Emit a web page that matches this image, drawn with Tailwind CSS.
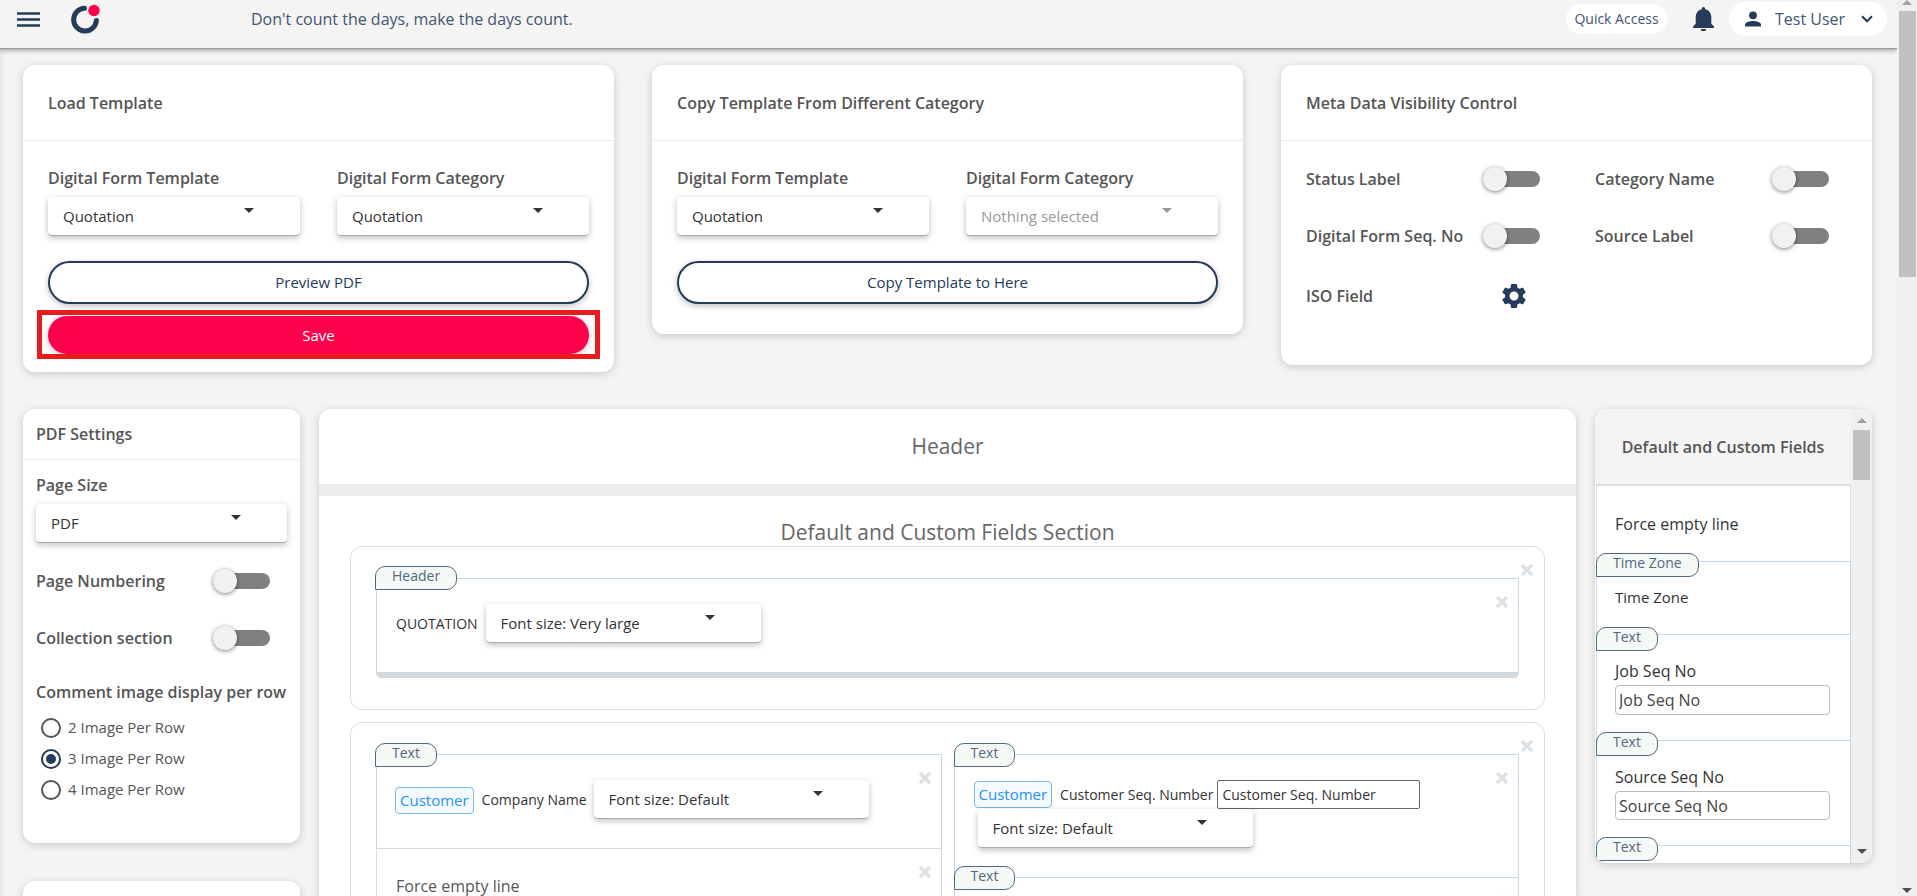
<!DOCTYPE html>
<html lang="en">
<head>
<meta charset="utf-8">
<title>Digital Form Template</title>
<script src="https://cdn.jsdelivr.net/npm/@tailwindcss/browser@4"></script>
</head>
<body class="flex h-screen overflow-hidden bg-[#f4f4f4] font-['Open_Sans',sans-serif] text-[#555]">
<svg class="hidden" aria-hidden="true">
  <symbol id="caret" viewBox="0 0 10 5"><path d="M0 0h10L5 5z" fill="currentColor"/></symbol>
  <symbol id="close" viewBox="0 0 12 12"><path d="M2 2l8 8M10 2l-8 8" stroke="currentColor" stroke-width="3.4" stroke-linecap="round"/></symbol>
</svg>

<div class="flex min-w-0 flex-1 flex-col overflow-hidden shadow-[inset_5px_0_5px_-3px_rgba(0,0,0,0.08)]">
  <header class="z-10 flex h-[49px] shrink-0 items-center border-b border-[#999] bg-[#f4f4f4] pr-2.5 pb-2.5 pl-[17px] text-[#243b5a] shadow-[0_1px_5px_rgba(0,0,0,0.4)]">
    <button aria-label="Menu"><svg class="block h-4 w-[23px]" viewBox="0 0 23 16"><path d="M0 2.5h23M0 8.5h23M0 14.5h23" stroke="currentColor" stroke-width="2.4"/></svg></button>
    <a href="#" aria-label="Home" class="ml-[30px]"><svg class="block h-8 w-8" viewBox="0 0 32 32" fill="none"><path d="M14.5 5.2A11.4 11.4 0 1 0 26.4 17.5" stroke="#243b5a" stroke-width="5" stroke-linecap="round"/><circle cx="24" cy="7.5" r="5.7" fill="#ff0048"/></svg></a>
    <p class="ml-[149px] text-base text-[#435672]">Don't count the days, make the days count.</p>
    <button class="ml-auto h-[30px] w-[101px] rounded-full bg-white text-sm text-[#435672]">Quick Access</button>
    <button aria-label="Notifications" class="ml-[26px]"><svg class="block h-6 w-[21px]" viewBox="0 0 21 24" fill="currentColor"><path d="M10.500 0a1.700 1.700 0 0 0-1.700 1.700v.6C5 3.100 2.700 6.300 2.700 10.200v6.600L0 19.600V21h21v-1.400l-2.700-2.800v-6.600c0-3.900-2.300-7.100-6.100-7.900v-.6A1.700 1.700 0 0 0 10.500 0zM7.800 22a2.700 2.300 0 0 0 5.400 0z"/></svg></button>
    <button class="ml-[15px] flex h-[34px] w-[158px] items-center rounded-full bg-white pl-4 text-base text-[#435672]">
      <svg class="h-4 w-4 text-[#243b5a]" viewBox="0 0 16 16" fill="currentColor"><circle cx="8" cy="4.300" r="3.900"/><path d="M0 15.600v-1.800C0 11.200 4.500 10 8 10s8 1.200 8 3.800v1.800z"/></svg>
      <span class="ml-3.5">Test User</span>
      <svg class="ml-auto mr-3.5 h-2 w-3 text-[#243b5a]" viewBox="0 0 12 8" fill="none"><path d="M1 1.300l5 5 5-5" stroke="currentColor" stroke-width="2"/></svg>
    </button>
  </header>

  <main class="flex min-h-0 flex-1 flex-col gap-[37px] overflow-hidden pt-4 pr-[25px] pl-[23px]">
    <div class="grid shrink-0 grid-cols-3 items-start gap-[38px]">
      <section class="rounded-xl bg-white shadow-[0_2px_8px_rgba(0,0,0,0.18)]">
        <h2 class="flex h-[76px] items-center border-b border-[#ebebeb] px-[25px] text-base font-semibold">Load Template</h2>
        <div class="px-[25px] pt-[25px] pb-[18px]">
          <div class="grid grid-cols-2 gap-[37px]">
            <div>
              <label for="lt" class="block text-base font-semibold">Digital Form Template</label>
              <div class="relative mt-[7px]"><select id="lt" class="h-[39px] w-full appearance-none rounded border-b border-[#aaa] bg-white pl-[15px] text-[15px] text-[#333] shadow-[0_2px_6px_rgba(0,0,0,0.25)]"><option>Quotation</option></select><svg class="pointer-events-none absolute top-[11px] right-[46px] h-[5px] w-2.5 text-[#333]"><use href="#caret"/></svg></div>
            </div>
            <div>
              <label for="lc" class="block text-base font-semibold">Digital Form Category</label>
              <div class="relative mt-[7px]"><select id="lc" class="h-[39px] w-full appearance-none rounded border-b border-[#aaa] bg-white pl-[15px] text-[15px] text-[#333] shadow-[0_2px_6px_rgba(0,0,0,0.25)]"><option>Quotation</option></select><svg class="pointer-events-none absolute top-[11px] right-[46px] h-[5px] w-2.5 text-[#333]"><use href="#caret"/></svg></div>
            </div>
          </div>
          <button class="mt-[25px] block h-[43px] w-full rounded-full border-2 border-[#243b5a] bg-white text-[15px] text-[#243b5a] shadow-[0_2px_6px_rgba(0,0,0,0.25)]">Preview PDF</button>
          <div class="relative mt-3">
            <button class="block h-[38px] w-full rounded-full bg-[#ff004c] text-[15px] text-white shadow-[0_2px_6px_rgba(0,0,0,0.25)]">Save</button>
            <span class="pointer-events-none absolute -inset-x-[11px] -top-1.5 -bottom-[5px] border-[5px] border-[#e81c1c]"></span>
          </div>
        </div>
      </section>

      <section class="rounded-xl bg-white shadow-[0_2px_8px_rgba(0,0,0,0.18)]">
        <h2 class="flex h-[76px] items-center border-b border-[#ebebeb] px-[25px] text-base font-semibold">Copy Template From Different Category</h2>
        <div class="px-[25px] pt-[25px] pb-[30px]">
          <div class="grid grid-cols-2 gap-[37px]">
            <div>
              <label for="ct" class="block text-base font-semibold">Digital Form Template</label>
              <div class="relative mt-[7px]"><select id="ct" class="h-[39px] w-full appearance-none rounded border-b border-[#aaa] bg-white pl-[15px] text-[15px] text-[#333] shadow-[0_2px_6px_rgba(0,0,0,0.25)]"><option>Quotation</option></select><svg class="pointer-events-none absolute top-[11px] right-[46px] h-[5px] w-2.5 text-[#333]"><use href="#caret"/></svg></div>
            </div>
            <div>
              <label for="cc" class="block text-base font-semibold">Digital Form Category</label>
              <div class="relative mt-[7px]"><select id="cc" class="h-[39px] w-full appearance-none rounded border-b border-[#aaa] bg-white pl-[15px] text-[15px] text-[#999] shadow-[0_2px_6px_rgba(0,0,0,0.25)]"><option>Nothing selected</option></select><svg class="pointer-events-none absolute top-[11px] right-[46px] h-[5px] w-2.5 text-[#999]"><use href="#caret"/></svg></div>
            </div>
          </div>
          <button class="mt-[25px] block h-[43px] w-full rounded-full border-2 border-[#243b5a] bg-white text-[15px] text-[#243b5a] shadow-[0_2px_6px_rgba(0,0,0,0.25)]">Copy Template to Here</button>
        </div>
      </section>

      <section class="rounded-xl bg-white shadow-[0_2px_8px_rgba(0,0,0,0.18)]">
        <h2 class="flex h-[76px] items-center border-b border-[#ebebeb] px-[25px] text-base font-semibold">Meta Data Visibility Control</h2>
        <div class="grid grid-cols-2 gap-x-[37px] px-[25px] pt-[9px] pb-[37px] text-base font-semibold">
          <div class="flex h-[57px] items-center"><label for="t1" class="w-[177px]">Status Label</label><input id="t1" type="checkbox" class="relative h-6 w-[57px] appearance-none before:absolute before:top-1 before:right-0 before:left-1 before:h-4 before:rounded-full before:bg-[#808080] after:absolute after:top-0 after:left-0 after:size-6 after:rounded-full after:bg-[#f1f1f1] after:shadow-[0_1px_4px_rgba(0,0,0,0.5)]"></div>
          <div class="flex h-[57px] items-center"><label for="t2" class="w-[177px]">Category Name</label><input id="t2" type="checkbox" class="relative h-6 w-[57px] appearance-none before:absolute before:top-1 before:right-0 before:left-1 before:h-4 before:rounded-full before:bg-[#808080] after:absolute after:top-0 after:left-0 after:size-6 after:rounded-full after:bg-[#f1f1f1] after:shadow-[0_1px_4px_rgba(0,0,0,0.5)]"></div>
          <div class="flex h-[57px] items-center"><label for="t3" class="w-[177px]">Digital Form Seq. No</label><input id="t3" type="checkbox" class="relative h-6 w-[57px] appearance-none before:absolute before:top-1 before:right-0 before:left-1 before:h-4 before:rounded-full before:bg-[#808080] after:absolute after:top-0 after:left-0 after:size-6 after:rounded-full after:bg-[#f1f1f1] after:shadow-[0_1px_4px_rgba(0,0,0,0.5)]"></div>
          <div class="flex h-[57px] items-center"><label for="t4" class="w-[177px]">Source Label</label><input id="t4" type="checkbox" class="relative h-6 w-[57px] appearance-none before:absolute before:top-1 before:right-0 before:left-1 before:h-4 before:rounded-full before:bg-[#808080] after:absolute after:top-0 after:left-0 after:size-6 after:rounded-full after:bg-[#f1f1f1] after:shadow-[0_1px_4px_rgba(0,0,0,0.5)]"></div>
          <div class="flex h-16 items-center"><span class="w-[177px]">ISO Field</span>
            <button aria-label="ISO field settings" class="ml-4 text-[#243b5a]"><svg class="block size-[30px]" viewBox="0 0 24 24" fill="currentColor"><path d="M19.140 12.940c.04-.3.060-.61.060-.94 0-.32-.02-.64-.07-.94l2.030-1.580a.49.490 0 0 0 .12-.61l-1.920-3.320a.488.488 0 0 0-.59-.22l-2.390.96c-.5-.38-1.030-.7-1.620-.94l-.36-2.540a.484.484 0 0 0-.48-.41h-3.840c-.24 0-.43.17-.47.410l-.36 2.540c-.59.240-1.130.57-1.620.94l-2.390-.96c-.22-.08-.47 0-.59.220L2.740 8.870c-.12.210-.08.470.12.610l2.030 1.580c-.05.300-.09.630-.09.940s.02.640.07.940l-2.030 1.580a.49.490 0 0 0-.12.610l1.920 3.320c.12.220.37.290.59.220l2.390-.96c.5.380 1.030.7 1.620.94l.36 2.540c.05.240.24.410.48.410h3.840c.24 0 .44-.17.470-.41l.36-2.540c.59-.24 1.130-.56 1.620-.94l2.390.96c.22.080.47 0 .59-.22l1.920-3.320c.12-.22.070-.47-.12-.61l-2.010-1.580zM12 15.600A3.610 3.610 0 0 1 8.400 12c0-1.980 1.620-3.600 3.600-3.600s3.600 1.620 3.600 3.600-1.620 3.600-3.600 3.600z"/></svg></button></div>
        </div>
      </section>
    </div>

    <div class="flex min-h-0 flex-1 gap-[19px]">
      <aside class="flex w-[277px] shrink-0 flex-col gap-[38px]">
        <section class="shrink-0 rounded-xl bg-white shadow-[0_2px_8px_rgba(0,0,0,0.18)]">
          <h2 class="flex h-[51px] items-center border-b border-[#ebebeb] px-[13px] text-base font-semibold">PDF Settings</h2>
          <div class="px-[13px] pt-[13px] pb-[38px]">
            <label for="ps" class="block text-base font-semibold">Page Size</label>
            <div class="relative mt-[7px]"><select id="ps" class="h-[39px] w-full appearance-none rounded border-b border-[#aaa] bg-white pl-[15px] text-[15px] text-[#333] shadow-[0_2px_6px_rgba(0,0,0,0.25)]"><option>PDF</option></select><svg class="pointer-events-none absolute top-[11px] right-[46px] h-[5px] w-2.5 text-[#333]"><use href="#caret"/></svg></div>
            <div class="mt-[9px] flex h-[57px] items-center justify-between pr-[17px] text-base font-semibold"><label for="t5">Page Numbering</label><input id="t5" type="checkbox" class="relative h-6 w-[57px] appearance-none before:absolute before:top-1 before:right-0 before:left-1 before:h-4 before:rounded-full before:bg-[#808080] after:absolute after:top-0 after:left-0 after:size-6 after:rounded-full after:bg-[#f1f1f1] after:shadow-[0_1px_4px_rgba(0,0,0,0.5)]"></div>
            <div class="flex h-[57px] items-center justify-between pr-[17px] text-base font-semibold"><label for="t6">Collection section</label><input id="t6" type="checkbox" class="relative h-6 w-[57px] appearance-none before:absolute before:top-1 before:right-0 before:left-1 before:h-4 before:rounded-full before:bg-[#808080] after:absolute after:top-0 after:left-0 after:size-6 after:rounded-full after:bg-[#f1f1f1] after:shadow-[0_1px_4px_rgba(0,0,0,0.5)]"></div>
            <fieldset class="mt-3.5">
              <legend class="mb-2 text-base font-semibold whitespace-nowrap">Comment image display per row</legend>
              <label class="flex h-[31px] items-center gap-[7px] pl-[5px] text-[15px]"><input type="radio" name="rows" class="relative size-5 appearance-none rounded-full border-2 border-[#555]">2 Image Per Row</label>
              <label class="flex h-[31px] items-center gap-[7px] pl-[5px] text-[15px]"><input type="radio" name="rows" checked class="relative size-5 appearance-none rounded-full border-2 border-[#243b5a] before:absolute before:inset-[3px] before:rounded-full before:bg-[#243b5a]">3 Image Per Row</label>
              <label class="flex h-[31px] items-center gap-[7px] pl-[5px] text-[15px]"><input type="radio" name="rows" class="relative size-5 appearance-none rounded-full border-2 border-[#555]">4 Image Per Row</label>
            </fieldset>
          </div>
        </section>
        <section class="h-60 shrink-0 rounded-xl bg-white shadow-[0_2px_8px_rgba(0,0,0,0.18)]"></section>
      </aside>

      <section class="min-w-0 flex-1 rounded-t-xl bg-white shadow-[0_2px_8px_rgba(0,0,0,0.18)]">
        <h2 class="flex h-[87px] items-center justify-center border-b-[12px] border-[#ececec] text-[21px] text-[#666]">Header</h2>
        <div class="px-[31px] pt-[22px]">
          <h3 class="text-center text-[21px] leading-7 text-[#666]">Default and Custom Fields Section</h3>

          <div class="relative h-[164px] rounded-xl border border-[#dcdcdc] px-[25px] pt-[31px]">
            <button aria-label="Remove section" class="absolute top-[17px] right-[11px] text-[#dce1e6]"><svg class="block size-3"><use href="#close"/></svg></button>
            <div class="relative flex h-[95px] items-start gap-2 border border-[#c8d8ec] pt-[25px] pl-[19px]">
              <span class="absolute -top-[13px] -left-0.5 flex h-6 items-center rounded-t-[10px] rounded-br-[10px] border border-[#52687f] bg-[#f4f9f6] px-4 pb-1 text-sm text-[#52687f]">Header</span>
              <button aria-label="Remove field" class="absolute top-[17px] right-2.5 text-[#dce1e6]"><svg class="block size-3"><use href="#close"/></svg></button>
              <label for="f1" class="pt-2 text-sm leading-6 font-medium text-[#333]">QUOTATION</label>
              <div class="relative w-[275px]"><select id="f1" class="h-[39px] w-full appearance-none rounded border-b border-[#aaa] bg-white pl-[15px] text-[15px] text-[#333] shadow-[0_2px_6px_rgba(0,0,0,0.25)]"><option>Font size: Very large</option></select><svg class="pointer-events-none absolute top-[11px] right-[46px] h-[5px] w-2.5 text-[#333]"><use href="#caret"/></svg></div>
            </div>
            <div class="h-[5px] rounded-b-[6px] bg-[#d6d8da]"></div>
          </div>

          <div class="relative mt-3 grid grid-cols-2 gap-3 rounded-xl border border-[#dcdcdc] px-[25px] pt-[31px]">
            <button aria-label="Remove section" class="absolute top-[17px] right-[11px] text-[#dce1e6]"><svg class="block size-3"><use href="#close"/></svg></button>
            <div>
              <div class="relative flex h-[94px] items-start border border-b-0 border-[#c8d8ec] pt-[25px] pl-[18px]">
                <span class="absolute -top-3 -left-0.5 flex h-6 items-center rounded-t-[10px] rounded-br-[10px] border border-[#52687f] bg-[#f4f9f6] px-4 pb-1 text-sm text-[#52687f]">Text</span>
                <button aria-label="Remove field" class="absolute top-[17px] right-2.5 text-[#dce1e6]"><svg class="block size-3"><use href="#close"/></svg></button>
                <span class="mt-[7px] rounded border border-[#74b9f3] bg-[#f4faff] px-1 text-[15px] leading-[25px] text-[#2593f3]">Customer</span>
                <label for="f2" class="mt-2 ml-2 w-[108px] text-sm leading-6 font-medium whitespace-nowrap text-[#333]">Company Name</label>
                <div class="relative ml-1 w-[275px]"><select id="f2" class="h-[39px] w-full appearance-none rounded border-b border-[#aaa] bg-white pl-[15px] text-[15px] text-[#333] shadow-[0_2px_6px_rgba(0,0,0,0.25)]"><option>Font size: Default</option></select><svg class="pointer-events-none absolute top-[11px] right-[46px] h-[5px] w-2.5 text-[#333]"><use href="#caret"/></svg></div>
              </div>
              <div class="relative h-[94px] border border-[#d8dce0] pt-[25px] pl-[19px] text-base">Force empty line
                <button aria-label="Remove field" class="absolute top-[17px] right-2.5 text-[#dce1e6]"><svg class="block size-3"><use href="#close"/></svg></button>
              </div>
            </div>
            <div>
              <div class="relative h-[123px] border border-b-0 border-[#c8d8ec] pt-[25px] pl-[19px]">
                <span class="absolute -top-3 -left-px flex h-6 items-center rounded-t-[10px] rounded-br-[10px] border border-[#52687f] bg-[#f4f9f6] px-4 pb-1 text-sm text-[#52687f]">Text</span>
                <button aria-label="Remove field" class="absolute top-[17px] right-2.5 text-[#dce1e6]"><svg class="block size-3"><use href="#close"/></svg></button>
                <div class="flex items-center">
                  <span class="rounded border border-[#74b9f3] bg-[#f4faff] px-1 text-[15px] leading-[25px] text-[#2593f3]">Customer</span>
                  <label for="f3" class="ml-2 text-sm leading-6 font-medium whitespace-nowrap text-[#333]">Customer Seq. Number</label>
                  <input id="f3" type="text" value="Customer Seq. Number" class="ml-1 h-[29px] w-[203px] rounded-[2px] border border-[#666] bg-white px-1 text-sm font-medium text-[#333]">
                </div>
                <div class="relative ml-1 w-[275px]"><select aria-label="Font size" class="h-[39px] w-full appearance-none rounded border-b border-[#aaa] bg-white pl-[15px] text-[15px] text-[#333] shadow-[0_2px_6px_rgba(0,0,0,0.25)]"><option>Font size: Default</option></select><svg class="pointer-events-none absolute top-[11px] right-[46px] h-[5px] w-2.5 text-[#333]"><use href="#caret"/></svg></div>
              </div>
              <div class="relative h-[94px] border border-[#c8d8ec]">
                <span class="absolute -top-3 -left-px flex h-6 items-center rounded-t-[10px] rounded-br-[10px] border border-[#52687f] bg-[#f4f9f6] px-4 pb-1 text-sm text-[#52687f]">Text</span>
                <button aria-label="Remove field" class="absolute top-[17px] right-2.5 text-[#dce1e6]"><svg class="block size-3"><use href="#close"/></svg></button>
              </div>
            </div>
          </div>
        </div>
      </section>

      <aside class="flex h-[454px] w-[277px] shrink-0 overflow-hidden rounded-xl bg-white shadow-[0_2px_8px_rgba(0,0,0,0.18)]">
        <div class="min-w-0 flex-1">
          <h2 class="flex h-[75px] items-center justify-center bg-[#f4f4f4] text-base font-semibold">Default and Custom Fields</h2>
          <div class="ml-px text-base text-[#333]">
            <div class="flex h-[77px] items-center border border-t-2 border-b-0 border-[#dcdcdc] pl-[18px]">Force empty line</div>
            <div class="relative h-[73px] border border-b-0 border-[#c8d8ec] pt-6 pl-[18px] text-[15px] font-medium">
              <span class="absolute -top-[9px] -left-px flex h-6 items-center rounded-t-[10px] rounded-br-[10px] border border-[#52687f] bg-[#f4f9f6] px-4 pb-1 text-sm font-normal text-[#52687f]">Time Zone</span>Time Zone</div>
            <div class="relative h-[106px] border border-b-0 border-[#c8d8ec] pt-6 pr-5 pl-[18px]">
              <span class="absolute -top-2 -left-px flex h-6 items-center rounded-t-[10px] rounded-br-[10px] border border-[#52687f] bg-[#f4f9f6] px-4 pb-1 text-sm text-[#52687f]">Text</span>
              <label for="js" class="block font-medium">Job Seq No</label>
              <input id="js" type="text" value="Job Seq No" class="mt-0.5 block h-[30px] w-full rounded border border-[#bbb] px-[3px] text-[#444]">
            </div>
            <div class="relative h-[105px] border border-b-0 border-[#c8d8ec] pt-6 pr-5 pl-[18px]">
              <span class="absolute -top-[9px] -left-px flex h-6 items-center rounded-t-[10px] rounded-br-[10px] border border-[#52687f] bg-[#f4f9f6] px-4 pb-1 text-sm text-[#52687f]">Text</span>
              <label for="ss" class="block font-medium">Source Seq No</label>
              <input id="ss" type="text" value="Source Seq No" class="mt-0.5 block h-[29px] w-full rounded border border-[#bbb] px-[3px] text-[#444]">
            </div>
            <div class="relative h-10 border border-b-0 border-[#c8d8ec]">
              <span class="absolute -top-[9px] -left-px flex h-6 items-center rounded-t-[10px] rounded-br-[10px] border border-[#52687f] bg-[#f4f9f6] px-4 pb-1 text-sm text-[#52687f]">Text</span>
            </div>
          </div>
        </div>
        <div class="flex w-[21px] shrink-0 flex-col items-center justify-between bg-[#f0f0f0] pt-[9px] pb-[9px]" aria-hidden="true">
          <svg class="h-[5px] w-2.5 rotate-180 text-[#a0a0a0]"><use href="#caret"/></svg>
          <span class="mt-[7px] mb-auto h-[50px] w-[17px] bg-[#c1c1c1]"></span>
          <svg class="h-[5px] w-2.5 text-[#505050]"><use href="#caret"/></svg>
        </div>
      </aside>
    </div>
  </main>
</div>

<div class="flex w-5 shrink-0 flex-col items-center bg-[#f0f0f0] pb-[3px]" aria-hidden="true">
  <svg class="h-[5px] w-2.5 rotate-180 text-[#a0a0a0]"><use href="#caret"/></svg>
  <span class="mt-1.5 mb-auto h-[266px] w-[17px] bg-[#c1c1c1]"></span>
  <svg class="h-[5px] w-2.5 text-[#505050]"><use href="#caret"/></svg>
</div>
</body>
</html>
